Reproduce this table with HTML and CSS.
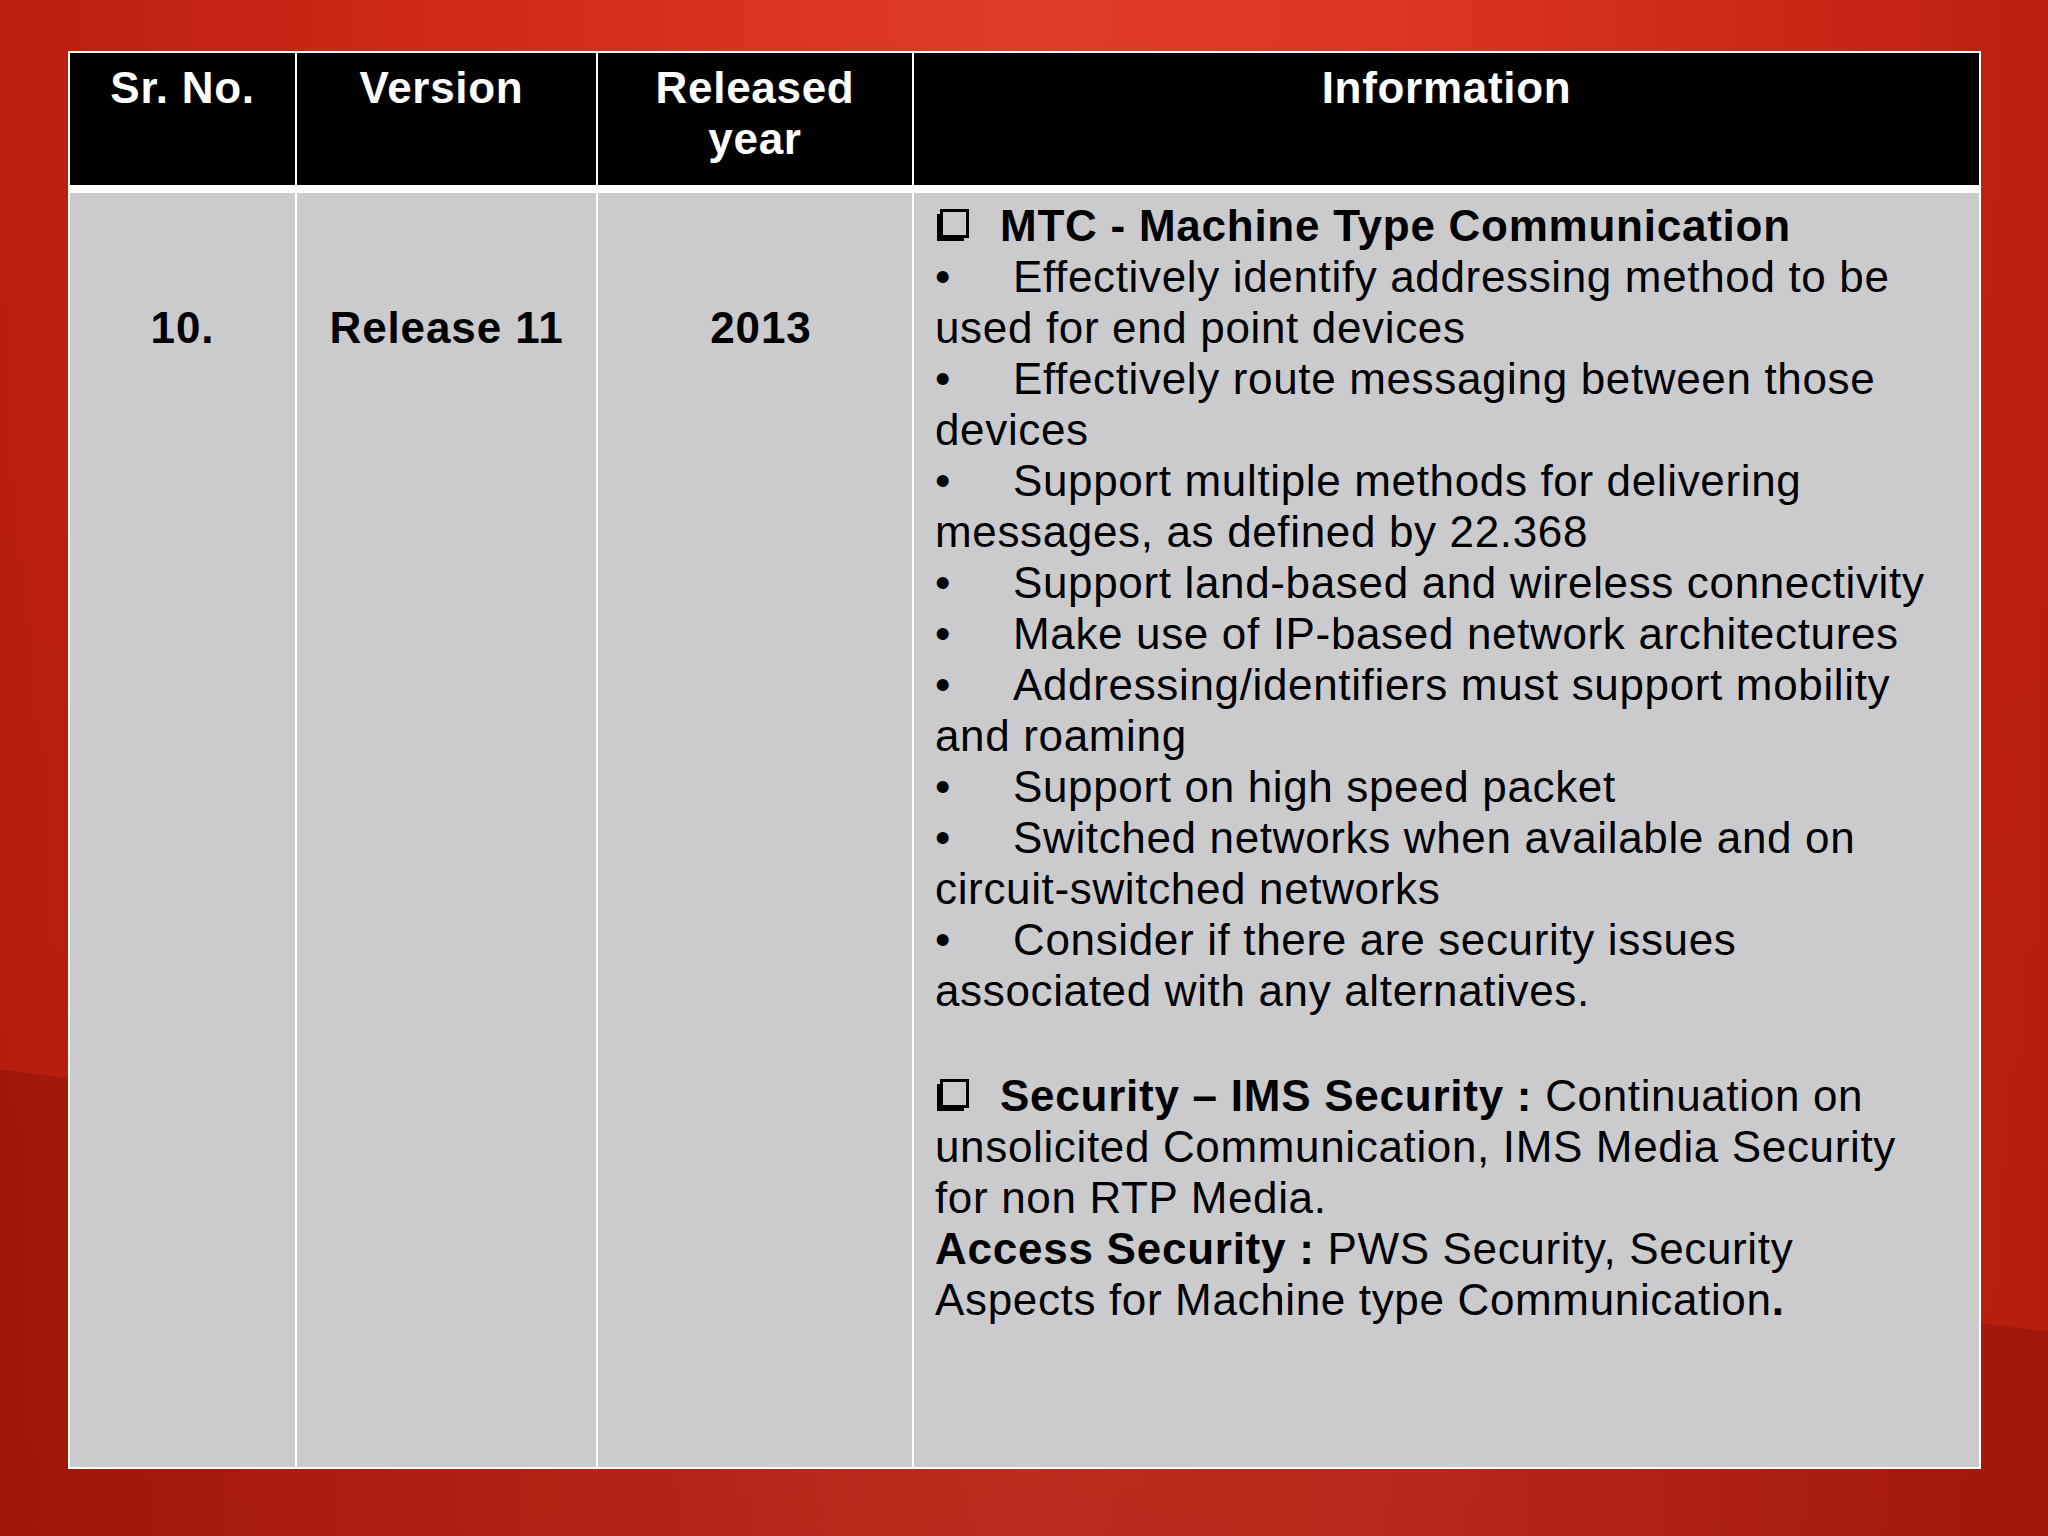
FILE: index.html
```html
<!DOCTYPE html>
<html lang="en">
<head>
<meta charset="utf-8">
<title>Release 11</title>
<link rel="stylesheet" href="styles.css">
</head>
<body>
<div class="slide">
  <div class="table">
    <div class="hcell">Sr. No.</div>
    <div class="hcell hver">Version</div>
    <div class="hcell">Released<br>year</div>
    <div class="hcell">Information</div>

    <div class="bcell center">10.</div>
    <div class="bcell center">Release 11</div>
    <div class="bcell center byear">2013</div>
    <div class="bcell info">
      <p><span class="box"><svg viewBox="0 0 32 32" width="32" height="32"><rect x="4.5" y="1.5" width="26" height="26" fill="none" stroke="#000" stroke-width="3"/><path d="M0 5H4.5V27.5H27V32H0Z" fill="#000"/></svg></span><b>MTC - Machine Type Communication</b></p>
      <p class="item">Effectively identify addressing method to be used for end point devices</p>
      <p class="item">Effectively route messaging between those devices</p>
      <p class="item">Support multiple methods for delivering messages, as defined by 22.368</p>
      <p class="item">Support land-based and wireless connectivity</p>
      <p class="item">Make use of IP-based network architectures</p>
      <p class="item">Addressing/identifiers must support mobility and roaming</p>
      <p class="item">Support on high speed packet</p>
      <p class="item">Switched networks when available and on circuit-switched networks</p>
      <p class="item">Consider if there are security issues associated with any alternatives.</p>
      <p class="blank"></p>
      <p><span class="box"><svg viewBox="0 0 32 32" width="32" height="32"><rect x="4.5" y="1.5" width="26" height="26" fill="none" stroke="#000" stroke-width="3"/><path d="M0 5H4.5V27.5H27V32H0Z" fill="#000"/></svg></span><b>Security – IMS Security :</b> <span>Continuation on</span> <span>unsolicited Communication, IMS Media Security for non RTP Media.</span></p>
      <p><b>Access Security :</b> <span>PWS Security, Security</span> <span>Aspects for Machine type Communication</span><b>.</b></p>
    </div>
  </div>
</div>
</body>
</html>
```
FILE: styles.css
```css
html, body {
  margin: 0;
  padding: 0;
}

body {
  width: 2048px;
  height: 1536px;
  overflow: hidden;
  font-family: "Liberation Sans", Arial, sans-serif;
  background:
    linear-gradient(187.3deg, rgba(0, 0, 0, 0) 1321px, rgba(90, 0, 0, 0.2) 1321px),
    linear-gradient(to bottom, rgba(0, 0, 0, 0) 0%, rgba(60, 0, 0, 0.08) 100%),
    linear-gradient(to right, #bb1e0d 0%, #cf2a17 22%, #e03d28 50%, #da3522 70%, #bd1f0c 100%);
}

.slide {
  padding: 51px 0 0 68px;
}

.table {
  width: 1913px;
  height: 1418px;
  box-sizing: border-box;
  padding: 2px;
  background: #ffffff;
  display: grid;
  grid-template-columns: 225px 299px 314px 1fr;
  grid-template-rows: 132px 1fr;
  gap: 8px 2px;
}

.hcell {
  background: #000000;
  color: #ffffff;
  font-weight: bold;
  font-size: 44px;
  line-height: 51px;
  letter-spacing: 0.7px;
  text-align: center;
  padding-top: 9px;
}

.hver {
  padding-right: 10px;
}

.bcell {
  background: #cbcbcd;
  color: #000000;
  font-size: 44px;
  line-height: 51px;
  letter-spacing: 0.65px;
}

.bcell b {
  letter-spacing: 0.75px;
}

.center {
  text-align: center;
  font-weight: bold;
  letter-spacing: 0.9px;
  padding-top: 109px;
}

.byear {
  padding-left: 12px;
}

.info {
  padding: 7px 37px 0 21px;
}

.info p {
  margin: 0;
}

.info .blank {
  height: 54px;
}

.item::before {
  content: "•";
  display: inline-block;
  width: 78px;
  letter-spacing: 0;
}

.box {
  display: inline-block;
  width: 65px;
}

.box svg {
  vertical-align: 0;
  margin-left: 2px;
}
```
